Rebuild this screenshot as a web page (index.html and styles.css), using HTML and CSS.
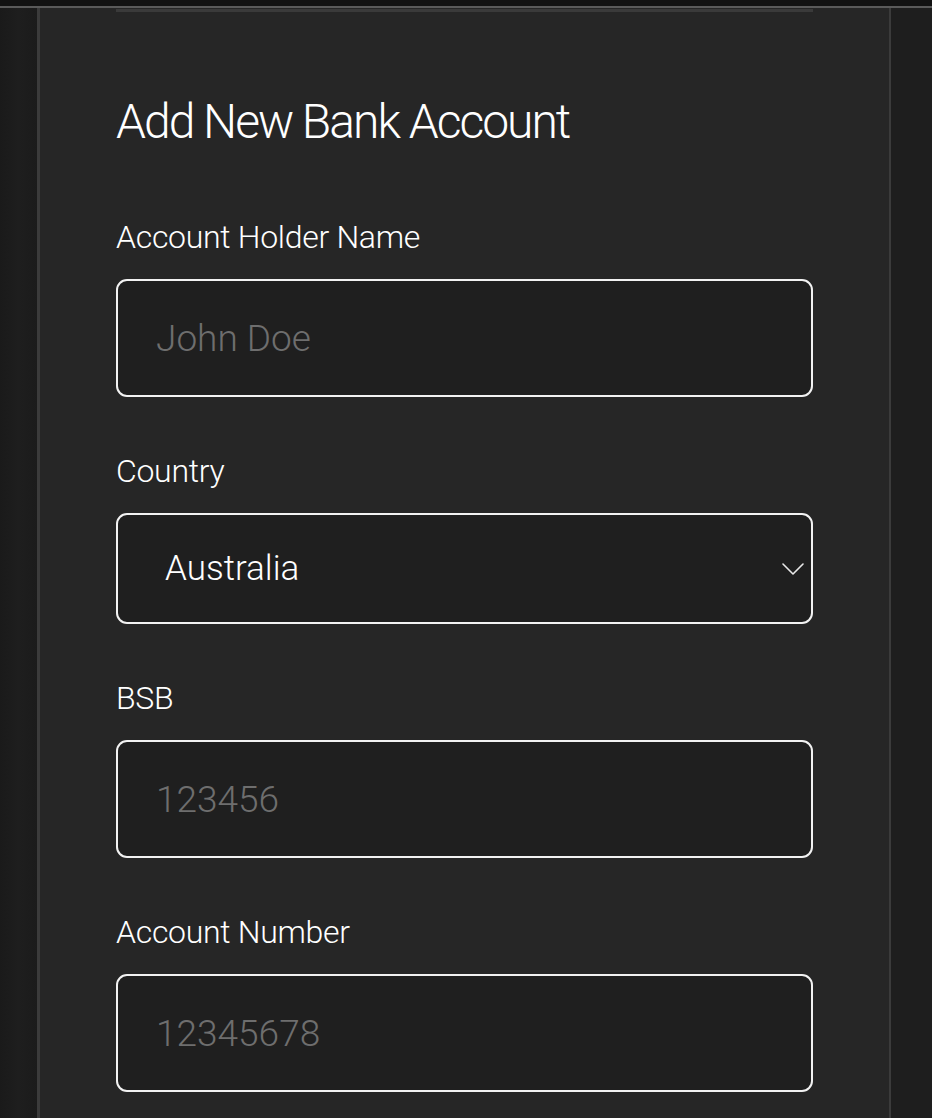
FILE: index.html
```html
<!DOCTYPE html>
<html lang="en">
<head>
<meta charset="utf-8">
<title>Add New Bank Account</title>
<link rel="stylesheet" href="styles.css">
</head>
<body>
<div class="topband"></div>
<div class="frame">
  <div class="side side-left"></div>
  <main class="panel">
    <div class="divider"></div>
    <h1 class="title">Add New Bank Account</h1>
    <form class="form">
      <div class="field">
        <label class="label" for="holder">Account Holder Name</label>
        <input class="input" id="holder" type="text" placeholder="John Doe">
      </div>
      <div class="field">
        <label class="label" for="country">Country</label>
        <div class="select-wrap">
          <select class="select" id="country">
            <option>Australia</option>
          </select>
          <svg class="chevron" width="22" height="12" viewBox="0 0 22 12" aria-hidden="true">
            <path d="M1 1 L11 11 L21 1" fill="none" stroke="#e8e8e8" stroke-width="1.6" stroke-linecap="round" stroke-linejoin="round"/>
          </svg>
        </div>
      </div>
      <div class="field">
        <label class="label" for="bsb">BSB</label>
        <input class="input" id="bsb" type="text" placeholder="123456">
      </div>
      <div class="field">
        <label class="label" for="acct">Account Number</label>
        <input class="input" id="acct" type="text" placeholder="12345678">
      </div>
    </form>
  </main>
  <div class="side side-right"></div>
</div>
</body>
</html>
```
FILE: styles.css
```css
* { box-sizing: border-box; }

html, body {
  margin: 0;
  padding: 0;
  height: 100%;
  background: #121212;
  overflow: hidden;
}

body {
  font-family: Roboto, "Liberation Sans", Arial, sans-serif;
  color: #ffffff;
}

.topband {
  height: 6px;
  background: #121212;
}

.frame {
  display: flex;
  border-top: 2px solid #5a5a5a;
  height: 1112px;
}

.side-left {
  width: 37px;
  background: linear-gradient(to right, #1a1a1a, #1e1e1e 50%, #1b1b1b);
}

.side-right {
  flex: 1;
  background: #1e1e1e;
}

.panel {
  width: 854px;
  background: #262626;
  border-left: 3px solid #3b3b3b;
  border-right: 2px solid #3b3b3b;
  padding: 0 76px 0 76px;
}

.divider {
  height: 3px;
  margin-top: 1px;
  background: #3a3a3a;
}

.title {
  margin: 82px 0 0 0;
  font-size: 48px;
  line-height: 56px;
  font-weight: 300;
  letter-spacing: -2px;
  color: #ffffff;
}

.form {
  display: flex;
  flex-direction: column;
  gap: 54px;
  margin-top: 67px;
}

.field {
  display: flex;
  flex-direction: column;
}

.label {
  font-size: 32px;
  line-height: 40px;
  font-weight: 300;
  letter-spacing: -0.3px;
  color: #ffffff;
  margin-bottom: 22px;
}

.input {
  height: 118px;
  width: 100%;
  background: #1f1f1f;
  border: 2px solid #f2f2f2;
  border-radius: 11px;
  padding: 0 38px;
  font-family: Roboto, "Liberation Sans", Arial, sans-serif;
  font-size: 37px;
  font-weight: 300;
  color: #ffffff;
  outline: none;
}

.input::placeholder {
  color: #6e6e6e;
  opacity: 1;
}

.select-wrap {
  position: relative;
}

.select {
  -webkit-appearance: none;
  appearance: none;
  display: block;
  width: 100%;
  height: 111px;
  background: #1f1f1f;
  border: 2px solid #f2f2f2;
  border-radius: 11px;
  padding: 0 60px 0 47px;
  font-family: Roboto, "Liberation Sans", Arial, sans-serif;
  font-size: 35px;
  font-weight: 300;
  color: #ffffff;
  outline: none;
}

.chevron {
  position: absolute;
  right: 9px;
  top: 50px;
  pointer-events: none;
}
```
